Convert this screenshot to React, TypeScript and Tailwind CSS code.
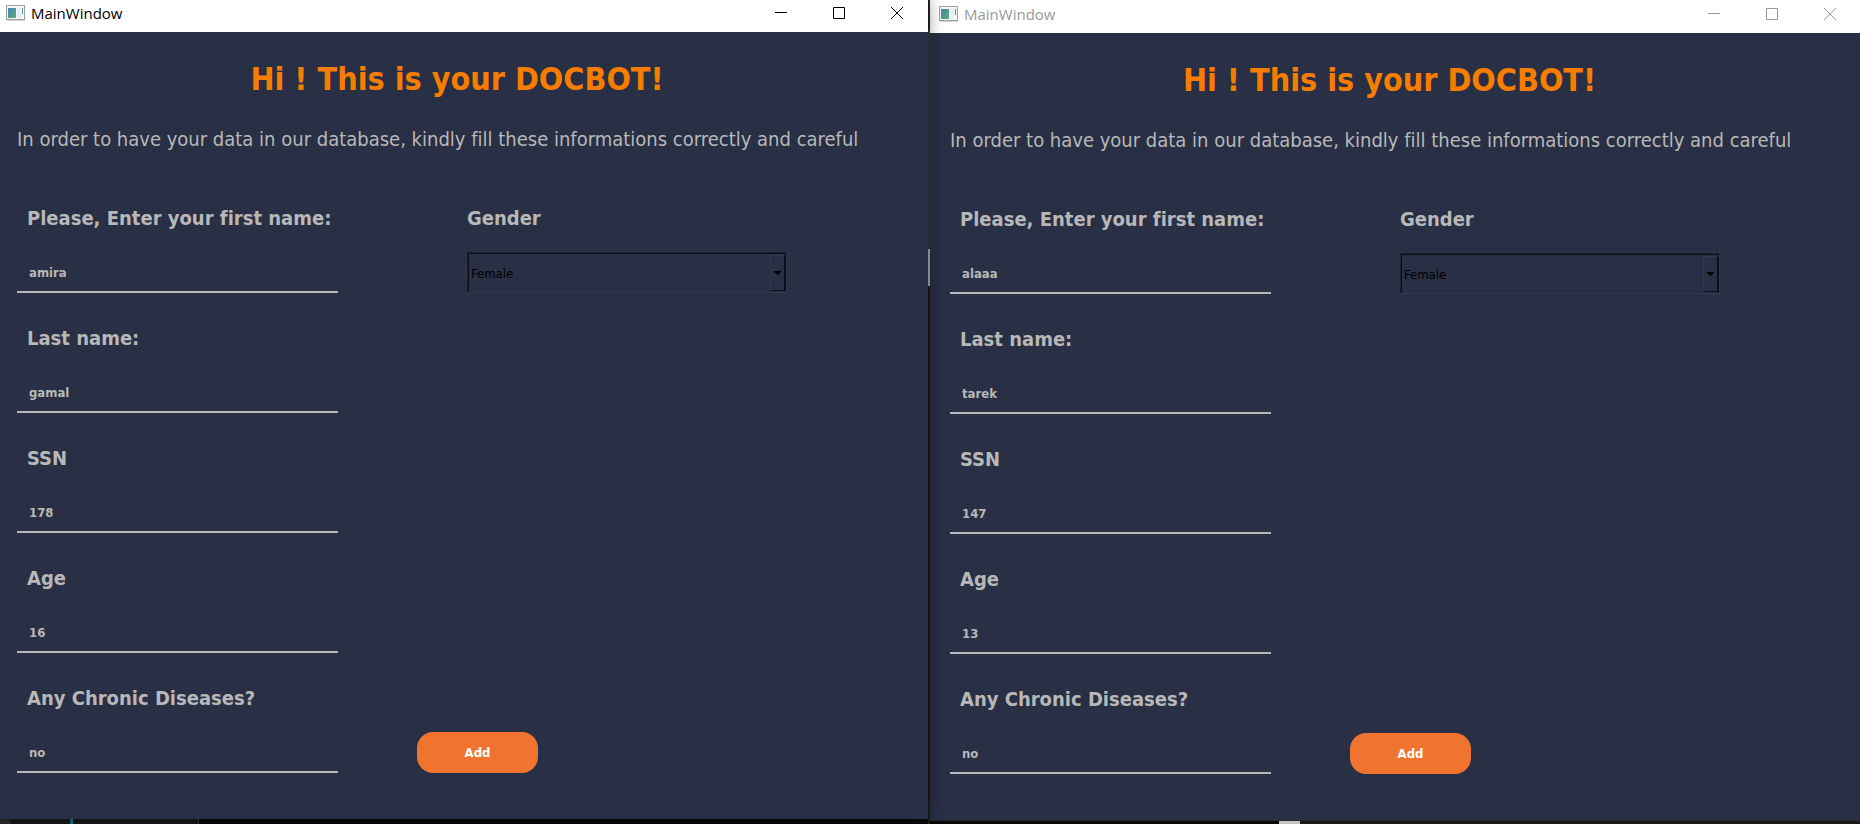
import React, { useId, useState } from "react";

type Patient = { first: string; last: string; ssn: string; age: string; chronic: string };

function AppIcon() {
  return (
    <svg width="20" height="17" viewBox="0 0 20 17" aria-hidden="true">
      <defs>
        <linearGradient id="pane" x1="0" y1="0" x2="1" y2="1">
          <stop offset="0" stopColor="#4f80b0" />
          <stop offset="1" stopColor="#56b078" />
        </linearGradient>
      </defs>
      <rect x="0.5" y="0.5" width="18" height="14" fill="#f7f8f9" stroke="#9aa1a6" />
      <rect x="2" y="3" width="8" height="10" fill="url(#pane)" />
      <rect x="11" y="3" width="4" height="10" fill="#e9edef" />
      <rect x="16" y="3" width="1" height="6" fill="url(#pane)" />
      <rect x="1" y="15" width="18" height="1" fill="#d5d8da" />
    </svg>
  );
}

function TitleBar({ active }: { active: boolean }) {
  return (
    <header
      className={
        active
          ? "flex h-8 items-start bg-white pr-[2px] pl-[6px] text-black"
          : "flex h-[33px] items-start bg-white pt-px pr-px pl-[9px] text-[#999999]"
      }
    >
      <div className="flex items-center gap-[5px] pt-[3px]">
        <AppIcon />
        <span className="font-['Open_Sans','Noto_Sans',sans-serif] text-[15px] leading-5">MainWindow</span>
      </div>
      <div className="ml-auto flex">
        <button type="button" aria-label="Minimize" className="flex h-[26px] w-[58px] items-center justify-center">
          <svg width="12" height="12" viewBox="0 0 12 12" stroke="currentColor" fill="none"><path d="M0 5.5H12" /></svg>
        </button>
        <button type="button" aria-label="Maximize" className="flex h-[26px] w-[58px] items-center justify-center">
          <svg width="12" height="12" viewBox="0 0 12 12" stroke="currentColor" fill="none"><path d="M0.5 0.5H11.5V11.5H0.5Z" /></svg>
        </button>
        <button type="button" aria-label="Close" className="flex h-[26px] w-[58px] items-center justify-center">
          <svg width="12" height="12" viewBox="0 0 12 12" stroke="currentColor" fill="none"><path d="M0 0L12 12M12 0L0 12" /></svg>
        </button>
      </div>
    </header>
  );
}

function Field({ label, initial }: { label: string; initial: string }) {
  const id = useId();
  const [value, setValue] = useState(initial);
  return (
    <div className="flex h-[120px] flex-col">
      <label htmlFor={id} className="pl-[10px] text-[20px] leading-7 font-bold">{label}</label>
      <input
        id={id}
        value={value}
        onChange={(e) => setValue(e.target.value)}
        className="mt-[19px] h-[42px] w-full border-b-2 border-[#b8b8b8] bg-transparent pt-[2px] pl-[12px] text-[13px] font-bold outline-none"
      />
    </div>
  );
}

function GenderSelect() {
  const id = useId();
  return (
    <div className="flex flex-col">
      <label htmlFor={id} className="text-[20px] leading-7 font-bold">Gender</label>
      <div className="relative mt-[20px] h-[41px] border border-t-[#1c2030] border-r-[#2f3852] border-b-[#2f3852] border-l-[#1c2030]">
        <select
          id={id}
          defaultValue="Female"
          className="h-full w-full appearance-none border-t border-r border-l border-[#0c0e14] bg-transparent pt-[2px] pl-[2px] text-[13px] text-black outline-none"
        >
          <option>Female</option>
          <option>Male</option>
        </select>
        <div className="pointer-events-none absolute top-[2px] right-[1px] bottom-[1px] flex w-[15px] items-center justify-center border border-t-[#2f3852] border-r-[#0c0e14] border-b-[#0c0e14] border-l-[#2f3852]">
          <svg width="7" height="4" viewBox="0 0 7 4" fill="#000"><path d="M0 0H7V1L3.5 4L0 1Z" /></svg>
        </div>
      </div>
    </div>
  );
}

function MainWindow({ active, patient }: { active: boolean; patient: Patient }) {
  return (
    <section
      className={
        active
          ? "relative z-10 flex flex-col shadow-[1px_0_14px_rgba(0,0,0,0.4)]"
          : "flex flex-col"
      }
    >
      <TitleBar active={active} />
      <main
        className={
          active
            ? "flex flex-col bg-[#292f45] pb-[14px] pl-[17px] text-[#b8b8b8]"
            : "flex flex-col bg-[#292f45] pb-[14px] pl-[20px] text-[#b8b8b8]"
        }
      >
        <h1 className="pt-[24px] pr-[31px] text-center text-[32px] leading-[46px] font-bold text-[#f77d00]">Hi ! This is your DOCBOT!</h1>
        <p className="mt-[20px] text-[20px] leading-[34px] whitespace-nowrap">
          In order to have your data in our database, kindly fill these informations correctly and careful
        </p>
        <form className="mt-[48px] flex" onSubmit={(e) => e.preventDefault()}>
          <div className="w-[321px]">
            <Field label="Please, Enter your first name:" initial={patient.first} />
            <Field label="Last name:" initial={patient.last} />
            <Field label="SSN" initial={patient.ssn} />
            <Field label="Age" initial={patient.age} />
            <Field label="Any Chronic Diseases?" initial={patient.chronic} />
          </div>
          <div className="ml-[79px] flex w-[370px] flex-col justify-between pb-[31px]">
            <div className="pl-[50px]">
              <GenderSelect />
            </div>
            <button type="submit" className="h-[41px] w-[121px] rounded-[16px] bg-[#f07430] text-[13px] font-bold text-white">Add</button>
          </div>
        </form>
        <div className="h-px" />
      </main>
    </section>
  );
}

export default function App() {
  return (
    <div className="flex min-h-screen bg-[#080808] font-['DejaVu_Sans_Condensed','DejaVu_Sans',sans-serif] [font-variant-ligatures:none]">
      <div className="flex min-w-0 flex-[464] flex-col">
        <MainWindow active patient={{ first: "amira", last: "gamal", ssn: "178", age: "16", chronic: "no" }} />
        <div className="flex flex-1">
          <div className="w-[11px] bg-[#2a2a2a]" />
          <div className="w-[59px] bg-[#181818]" />
          <div className="w-[3px] bg-[#0b6f8c]" />
          <div className="w-[125px] bg-[#181818]" />
          <div className="w-px bg-[#3a3a3a]" />
        </div>
      </div>
      <div className="flex w-[2px] flex-col bg-[#1f1d1b]">
        <div className="h-[30px] bg-[#242424]" />
        <div className="h-[219px] bg-[#25403f]" />
        <div className="relative z-20 h-[37px] bg-[#8a8a8a]" />
      </div>
      <div className="flex min-w-0 flex-[465] flex-col">
        <MainWindow active={false} patient={{ first: "alaaa", last: "tarek", ssn: "147", age: "13", chronic: "no" }} />
        <div className="flex flex-1 border-t border-[#2c2a28]">
          <div className="w-[349px]" />
          <div className="w-[21px] bg-[#c4c4c4]" />
          <div className="flex-1 bg-[#1a1a1a]" />
        </div>
      </div>
    </div>
  );
}
